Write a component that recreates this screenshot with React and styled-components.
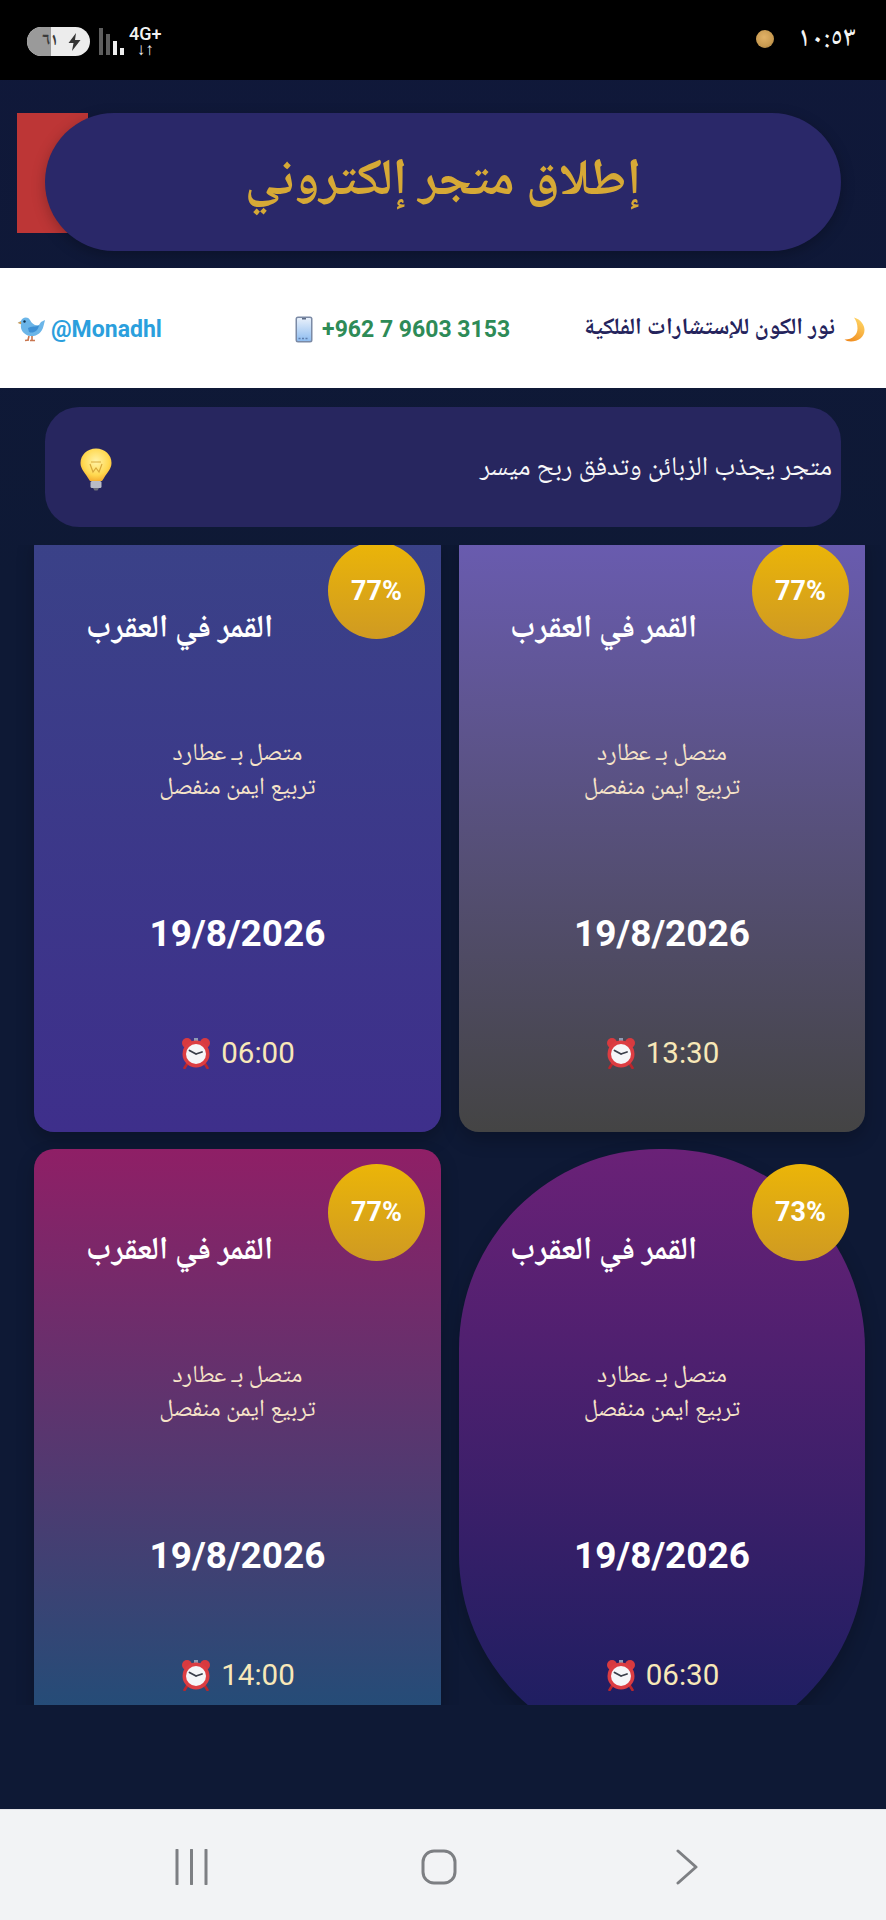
import React from 'react';
import styled, { createGlobalStyle } from 'styled-components';

const arabicStack = `"Noto Naskh Arabic", "Noto Sans Arabic", "DejaVu Sans", sans-serif`;
const latinStack = `Roboto, "Noto Sans", sans-serif`;

const GlobalStyle = createGlobalStyle`
  html, body {
    margin: 0;
    padding: 0;
    background: #0d1833;
  }
  * {
    box-sizing: border-box;
  }
`;

const Screen = styled.div`
  width: 886px;
  height: 1920px;
  display: flex;
  flex-direction: column;
  overflow: hidden;
  background: linear-gradient(180deg, #10183a 0%, #0e1935 30%, #0e1935 100%);
  font-family: ${arabicStack};
`;

/* status bar */
const StatusBar = styled.div`
  height: 80px;
  flex-shrink: 0;
  background: #000;
  display: flex;
  align-items: flex-start;
  justify-content: space-between;
  padding: 27px 30px 0 27px;
`;

const StatusLeft = styled.div`
  display: flex;
  align-items: flex-start;
  gap: 9px;
`;

const Battery = styled.div`
  width: 63px;
  height: 29px;
  border-radius: 15px;
  overflow: hidden;
  display: flex;
  background: #ececec;
`;

const BatteryLevel = styled.div`
  width: 24px;
  padding-left: 15px;
  background: #9a9a9a;
  color: #3a3a3a;
  font-size: 17px;
  font-weight: 700;
  line-height: 29px;
  white-space: nowrap;
`;

const BatteryBolt = styled.div`
  flex: 1;
  display: flex;
  align-items: center;
  justify-content: center;
  padding-left: 7px;
`;

const Signal = styled.div`
  display: flex;
  align-items: flex-end;
  gap: 3px;
  height: 27px;
  margin-top: 1px;
`;

const SignalBar = styled.div`
  width: 4px;
  height: ${(p) => p.$h}px;
  background: ${(p) => (p.$on ? '#eeeeee' : '#5e5e5e')};
`;

const NetworkType = styled.div`
  display: flex;
  flex-direction: column;
  align-items: center;
  margin-left: -4px;
  margin-top: -1px;
  color: #f2f2f2;
  font-family: ${latinStack};
  font-size: 18px;
  font-weight: 500;
  line-height: 16px;
`;

const NetworkArrows = styled.span`
  font-size: 17px;
  font-weight: 700;
  line-height: 14px;
`;

const StatusRight = styled.div`
  display: flex;
  align-items: flex-start;
  gap: 24px;
`;

const PlanetDot = styled.div`
  width: 18px;
  height: 18px;
  margin-top: 3px;
  border-radius: 50%;
  background: radial-gradient(circle at 45% 40%, #e2b267 0%, #c89a50 60%, #8a6a38 100%);
`;

const Clock = styled.div`
  margin-top: 1px;
  color: #f5f5f5;
  font-size: 28px;
  font-weight: 500;
  line-height: 24px;
  direction: ltr;
`;

/* header */
const HeaderWrap = styled.div`
  position: relative;
  padding: 33px 45px 17px;
`;

const RedTab = styled.div`
  position: absolute;
  left: 17px;
  top: 33px;
  width: 71px;
  height: 120px;
  background: #bd3636;
`;

const TitlePill = styled.div`
  position: relative;
  height: 138px;
  border-radius: 69px;
  background: #2a2869;
  box-shadow: 0 4px 14px rgba(0, 0, 0, 0.25);
  display: flex;
  align-items: center;
  justify-content: center;
`;

const Title = styled.h1`
  margin: 2px 0 0;
  color: #d6a936;
  font-size: 51px;
  font-weight: 700;
  line-height: 1.2;
`;

/* contact strip */
const ContactStrip = styled.div`
  height: 120px;
  flex-shrink: 0;
  background: #fff;
  display: flex;
  flex-direction: row-reverse;
  align-items: center;
  gap: 74px;
  padding: 2px 21px 0 17px;
`;

const ContactItem = styled.div`
  display: flex;
  align-items: center;
  gap: ${(p) => p.$gap || 9}px;
  margin-right: ${(p) => (p.$pushed ? 'auto' : '0')};
  color: ${(p) => p.$color};
  font-family: ${(p) => (p.$latin ? latinStack : arabicStack)};
  font-size: ${(p) => p.$size || 23}px;
  font-weight: 700;
  white-space: nowrap;
`;

/* tip */
const TipBox = styled.div`
  height: 120px;
  flex-shrink: 0;
  margin: 19px 45px 18px;
  padding: 4px 9px 0 35px;
  border-radius: 34px;
  background: #27265f;
  display: flex;
  flex-direction: row-reverse;
  align-items: center;
  justify-content: space-between;
`;

const TipText = styled.div`
  color: #f7f7f7;
  font-size: 27px;
  line-height: 1.2;
`;

/* cards */
const CardViewport = styled.div`
  height: 1160px;
  flex-shrink: 0;
  overflow: hidden;
  padding: 0 21px 0 34px;
`;

const CardGrid = styled.div`
  display: grid;
  grid-template-columns: 407px 406px;
  grid-auto-rows: 605px;
  column-gap: 18px;
  row-gap: 16.5px;
  margin-top: -18px;
`;

const Card = styled.div`
  position: relative;
  border-radius: ${(p) => p.$radius}px;
  background: linear-gradient(180deg, ${(p) => p.$from}, ${(p) => p.$to});
  box-shadow: 0 8px 18px rgba(0, 0, 0, 0.22);
  display: flex;
  flex-direction: column;
  align-items: center;
  padding-top: 83px;
`;

const Badge = styled.div`
  position: absolute;
  top: 15px;
  right: 16px;
  width: 97px;
  height: 97px;
  border-radius: 50%;
  background: linear-gradient(180deg, #ebb508, #cf9a22);
  color: #fff;
  font-family: ${latinStack};
  font-size: 27px;
  font-weight: 700;
  display: flex;
  align-items: center;
  justify-content: center;
`;

const CardHeading = styled.h2`
  align-self: flex-end;
  margin: 0 168px 0 0;
  color: #fff;
  font-size: 32px;
  font-weight: 700;
  line-height: 40px;
  white-space: nowrap;
`;

const Aspects = styled.div`
  margin-top: 88px;
  color: #f6e3c8;
  font-size: 24.5px;
  line-height: 34px;
  text-align: center;
`;

const DateText = styled.div`
  margin-top: 106px;
  color: #fff;
  font-family: ${latinStack};
  font-size: 37px;
  font-weight: 700;
  line-height: 44px;
`;

const TimeRow = styled.div`
  margin-top: 79px;
  display: flex;
  align-items: center;
  gap: 9px;
  color: #f8e8b8;
  font-family: ${latinStack};
  font-size: 29.5px;
  line-height: 36px;
`;

/* nav bar */
const Spacer = styled.div`
  flex: 1;
`;

const NavBar = styled.div`
  height: 111px;
  flex-shrink: 0;
  background: #f2f3f5;
  border-top: 1px solid #e4e5e8;
  display: grid;
  grid-template-columns: 175px 33px 213px 36px 219px 22px 1fr;
  padding-top: 39px;
  align-items: start;
`;

const NavIcon = styled.svg`
  grid-column: ${(p) => p.$col};
  display: block;
`;

const BirdIcon = () => (
  <svg width="29" height="26" viewBox="0 0 29 26">
    <path d="M1 6.5 L4 5 C5 1 11 0 13 4 C15 8 18 10 22 9 L24 6 L28 4 L26.5 10 C25 17 19 21 13 20 C7 19 3 14 4 8.5 Z" fill="#6bb5e8" />
    <path d="M11 12 C14 10 19 11 22 9.5 C21 15 16 18 12 16 Z" fill="#3c8fd4" />
    <circle cx="7.5" cy="5.5" r="1.2" fill="#12344f" />
    <path d="M0.5 7 L4 5.5 L4.2 8 Z" fill="#e59a3c" />
    <path d="M12 20 L11 24 M15 20 L15 24 M8 24.5 L12 24 M13 24.5 L18 24.5" stroke="#c9764f" strokeWidth="1.6" fill="none" />
  </svg>
);

const PhoneIcon = () => (
  <svg width="18" height="27" viewBox="0 0 18 27">
    <defs>
      <linearGradient id="phoneScreen" x1="0" y1="0" x2="0" y2="1">
        <stop offset="0" stopColor="#e8f0fb" />
        <stop offset="1" stopColor="#8fbdf0" />
      </linearGradient>
    </defs>
    <rect x="0.5" y="0.5" width="17" height="26" rx="2.5" fill="#7b8aa5" />
    <rect x="2" y="2" width="14" height="23" rx="1" fill="url(#phoneScreen)" />
    <rect x="7" y="2" width="4" height="1.5" fill="#5d6b85" />
    <path d="M3.5 22.5h2M7 22.5h2M10.5 22.5h2" stroke="#5f7fae" strokeWidth="1.4" />
  </svg>
);

const MoonIcon = () => (
  <svg width="21" height="25" viewBox="0 0 21 25">
    <defs>
      <linearGradient id="moonFill" x1="0.8" y1="0" x2="0.2" y2="1">
        <stop offset="0" stopColor="#ffd766" />
        <stop offset="1" stopColor="#f08a1d" />
      </linearGradient>
    </defs>
    <path d="M10 0.5 C17 2.5 20.5 8 20.5 13 C20.5 20 14 24.5 7 24.5 C4 24.5 2 23.7 0.5 22.5 C8 22.8 13.5 18 13.5 11.5 C13.5 7 12 3 10 0.5 Z" fill="url(#moonFill)" />
  </svg>
);

const BulbIcon = () => (
  <svg width="32" height="43" viewBox="0 0 32 43">
    <defs>
      <radialGradient id="bulbGlass" cx="0.5" cy="0.4" r="0.65">
        <stop offset="0" stopColor="#fff3a8" />
        <stop offset="0.65" stopColor="#ffd84f" />
        <stop offset="1" stopColor="#f4a62a" />
      </radialGradient>
    </defs>
    <path d="M16 0.5 C25 0.5 31.5 7 31.5 15 C31.5 21 27 24.5 24 30 L22 33 L10 33 L8 30 C5 24.5 0.5 21 0.5 15 C0.5 7 7 0.5 16 0.5 Z" fill="url(#bulbGlass)" />
    <path d="M10 16 L13 24 L16 20 L19 24 L22 16 M11 14 H21" stroke="#d8a83a" strokeWidth="1.2" fill="none" />
    <rect x="10.5" y="33" width="11" height="7" rx="1.5" fill="#b9bcc6" />
    <path d="M13 40 H19 L17.5 42.5 H14.5 Z" fill="#6c6f7c" />
  </svg>
);

const AlarmIcon = () => (
  <svg width="32" height="32" viewBox="0 0 32 32">
    <circle cx="7" cy="6" r="5" fill="#d83a3f" />
    <circle cx="25" cy="6" r="5" fill="#d83a3f" />
    <rect x="14" y="1" width="4" height="4" fill="#8f9bb3" />
    <path d="M7 27 L4.5 31 M25 27 L27.5 31" stroke="#b9262c" strokeWidth="2.6" strokeLinecap="round" />
    <circle cx="16" cy="17" r="13.5" fill="#dc3d42" />
    <circle cx="16" cy="17" r="10" fill="#f5f6f8" />
    <path d="M16 17 L9.5 13.5 M16 17 L22 15" stroke="#3a3f4a" strokeWidth="1.8" strokeLinecap="round" />
  </svg>
);

const BoltIcon = () => (
  <svg width="13" height="18" viewBox="0 0 13 18">
    <path d="M8 0 L0.5 10 H5.5 L4 18 L12.5 7 H7 Z" fill="#333" />
  </svg>
);

const cards = [
  { pct: '77%', time: '06:00', from: '#3a4288', to: '#3e2f8b', radius: 20 },
  { pct: '77%', time: '13:30', from: '#6a5cb2', to: '#444444', radius: 20 },
  { pct: '77%', time: '14:00', from: '#8f1f66', to: '#1c5079', radius: 20 },
  { pct: '73%', time: '06:30', from: '#6a2177', to: '#191e60', radius: 200 },
];

const signalBars = [
  { h: 27, on: false },
  { h: 21, on: false },
  { h: 14, on: true },
  { h: 7, on: true },
];

const App = () => {
  return (
    <Screen>
      <GlobalStyle />

      <StatusBar>
        <StatusLeft>
          <Battery>
            <BatteryLevel>٦١</BatteryLevel>
            <BatteryBolt>
              <BoltIcon />
            </BatteryBolt>
          </Battery>
          <Signal>
            {signalBars.map((bar, i) => (
              <SignalBar key={i} $h={bar.h} $on={bar.on} />
            ))}
          </Signal>
          <NetworkType>
            <span>4G+</span>
            <NetworkArrows>↓↑</NetworkArrows>
          </NetworkType>
        </StatusLeft>
        <StatusRight>
          <PlanetDot />
          <Clock>١٠:٥٣</Clock>
        </StatusRight>
      </StatusBar>

      <HeaderWrap>
        <RedTab />
        <TitlePill>
          <Title dir="rtl">إطلاق متجر إلكتروني</Title>
        </TitlePill>
      </HeaderWrap>

      <ContactStrip>
        <ContactItem $color="#24235c" $size={23.5} dir="rtl">
          <MoonIcon />
          <span>نور الكون للإستشارات الفلكية</span>
        </ContactItem>
        <ContactItem $color="#2e8b57" $latin>
          <PhoneIcon />
          <span>+962 7 9603 3153</span>
        </ContactItem>
        <ContactItem $color="#2b9fdd" $latin $gap={5} $pushed>
          <BirdIcon />
          <span>@Monadhl</span>
        </ContactItem>
      </ContactStrip>

      <TipBox>
        <TipText dir="rtl">متجر يجذب الزبائن وتدفق ربح ميسر</TipText>
        <BulbIcon />
      </TipBox>

      <CardViewport>
        <CardGrid>
          {cards.map((card, index) => (
            <Card key={index} $from={card.from} $to={card.to} $radius={card.radius}>
              <Badge>{card.pct}</Badge>
              <CardHeading dir="rtl">القمر في العقرب</CardHeading>
              <Aspects dir="rtl">
                <div>متصل بـ عطارد</div>
                <div>تربيع ايمن منفصل</div>
              </Aspects>
              <DateText>19/8/2026</DateText>
              <TimeRow>
                <AlarmIcon />
                <span>{card.time}</span>
              </TimeRow>
            </Card>
          ))}
        </CardGrid>
      </CardViewport>

      <Spacer />

      <NavBar>
        <NavIcon $col={2} width="33" height="36" viewBox="0 0 33 36">
          <path d="M2 1v34M16.5 1v34M31 1v34" stroke="#7d7f83" strokeWidth="3" strokeLinecap="round" />
        </NavIcon>
        <NavIcon $col={4} width="36" height="36" viewBox="0 0 36 36">
          <rect x="2" y="2" width="32" height="32" rx="11" fill="none" stroke="#7d7f83" strokeWidth="3" />
        </NavIcon>
        <NavIcon $col={6} width="22" height="36" viewBox="0 0 22 36">
          <path d="M2 2 L20 18 L2 34" fill="none" stroke="#7d7f83" strokeWidth="3" strokeLinecap="round" strokeLinejoin="round" />
        </NavIcon>
      </NavBar>
    </Screen>
  );
};

export default App;
